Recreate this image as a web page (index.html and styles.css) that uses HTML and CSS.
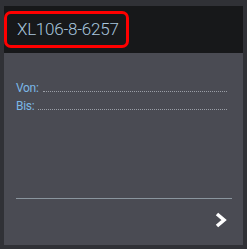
FILE: index.html
```html
<!DOCTYPE html>
<html>
<head>
<meta charset="utf-8">
<link rel="stylesheet" href="styles.css">
</head>
<body>
<div class="card">
  <div class="header">
    <span class="title">XL106-8-6257</span>
    <div class="highlight"></div>
  </div>
  <div class="content">
    <div class="row"><span class="label">Von:</span><span class="dots"></span></div>
    <div class="row"><span class="label">Bis:</span><span class="dots"></span></div>
  </div>
  <div class="divider"></div>
  <div class="footer">
    <svg class="chev" width="16" height="16" viewBox="0 0 16 16"><path d="M4 2 L11 8 L4 14" fill="none" stroke="#ffffff" stroke-width="3.6" stroke-linejoin="miter"/></svg>
  </div>
</div>
</body>
</html>
```
FILE: styles.css
```css
html, body {
  margin: 0;
  padding: 0;
  background: #303136;
  width: 247px;
  height: 249px;
  overflow: hidden;
  font-family: Roboto, "Liberation Sans", sans-serif;
}
.card {
  margin: 6px 4px 0 4px;
  width: 239px;
  height: 239px;
  background: #4a4b53;
  display: flex;
  flex-direction: column;
}
.header {
  position: relative;
  height: 47px;
  background: #17181a;
  display: flex;
  align-items: center;
  padding-left: 13px;
  box-sizing: border-box;
}
.title {
  color: #a9c6de;
  font-size: 17px;
  letter-spacing: -0.25px;
  font-weight: 300;
  margin-top: -1px;
}
.highlight {
  position: absolute;
  left: 0;
  top: 5px;
  width: 125px;
  height: 37px;
  border: 3px solid #ff0000;
  border-radius: 7px;
  box-sizing: border-box;
}
.content {
  padding: 28px 16px 0 12px;
  display: flex;
  flex-direction: column;
  gap: 4px;
}
.row {
  display: flex;
  align-items: flex-end;
  height: 14px;
}
.label {
  color: #7bb7e6;
  font-size: 12px;
  line-height: 14px;
  letter-spacing: -0.3px;
}
.dots {
  flex: 1;
  margin-left: 4px;
  border-bottom: 1px dotted #9a9ea6;
  margin-bottom: 3px;
}
.divider {
  margin: 85px 11px 0 12px;
  height: 1px;
  background: #8a959e;
}
.footer {
  display: flex;
  justify-content: flex-end;
  padding: 13px 14px 0 0;
}
```
